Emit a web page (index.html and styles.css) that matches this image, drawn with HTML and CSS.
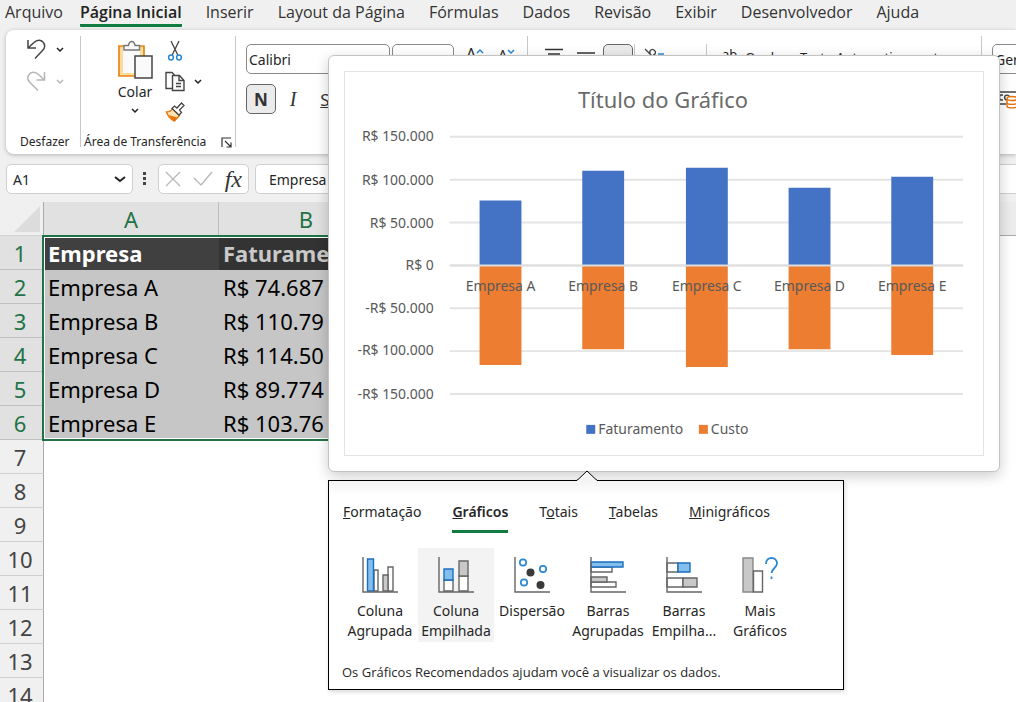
FILE: index.html
```html
<!DOCTYPE html>
<html lang="pt-BR">
<head>
<meta charset="utf-8">
<meta name="viewport" content="width=device-width, initial-scale=1">
<title>Planilha</title>
<link rel="stylesheet" href="styles.css">
</head>
<body>
<div class="app">
  <nav class="menu">
    <button class="menu-tab">Arquivo</button>
    <button class="menu-tab active">Página Inicial</button>
    <button class="menu-tab">Inserir</button>
    <button class="menu-tab">Layout da Página</button>
    <button class="menu-tab">Fórmulas</button>
    <button class="menu-tab">Dados</button>
    <button class="menu-tab">Revisão</button>
    <button class="menu-tab">Exibir</button>
    <button class="menu-tab">Desenvolvedor</button>
    <button class="menu-tab">Ajuda</button>
  </nav>

  <section class="ribbon">
    <div class="group undo-group">
      <div class="undo-row">
        <button class="icon-btn" aria-label="Desfazer"><svg width="22" height="24" viewBox="0 0 22 24" fill="none" stroke="#444" stroke-width="1.5"><path d="M2 2v8h8M2 10l6-5.500C11 1.500 15 1.500 17 4c2.300 2.700 2 6-.5 8.500L9 20.500"/></svg></button>
        <button class="icon-btn" aria-label="Opções de desfazer"><svg width="8" height="6" viewBox="0 0 8 6" fill="none" stroke="#222" stroke-width="1.500"><path d="m1 1 3 3 3-3"/></svg></button>
      </div>
      <div class="undo-row">
        <button class="icon-btn" aria-label="Refazer"><svg width="22" height="24" viewBox="0 0 22 24" fill="none" stroke="#b5b5b5" stroke-width="1.5"><path d="M18.500 2v8h-8M18.500 10 12.500 4.500C9.500 1.500 5.500 1.500 3.500 4c-2.300 2.700-2 6 .5 8.500l8 8"/></svg></button>
        <button class="icon-btn" aria-label="Opções de refazer"><svg width="8" height="6" viewBox="0 0 8 6" fill="none" stroke="#b5b5b5" stroke-width="1.500"><path d="m1 1 3 3 3-3"/></svg></button>
      </div>
      <div class="group-label">Desfazer</div>
    </div>

    <div class="group clip-group">
      <div class="clip-tools">
        <button class="paste-btn">
          <svg width="36" height="40" viewBox="0 0 36 40" fill="none"><path d="M2 6h25v30H2z" fill="#fbdd9b" stroke="#e8851a" stroke-width="1.700"/><path d="M6 9h17v24H6z" fill="#fafafa"/><path d="M7 10V5.500h4.500C12 2.500 13 1.500 14.700 1.500S17.500 2.500 18 5.500h4.500V10z" fill="#fafafa" stroke="#777" stroke-width="1.400"/><path d="M18 16h17v22H18z" fill="#fafafa" stroke="#444" stroke-width="1.500"/></svg>
          <span>Colar</span>
          <svg width="8" height="6" viewBox="0 0 8 6" fill="none" stroke="#222" stroke-width="1.500"><path d="m1 1 3 3 3-3"/></svg>
        </button>
        <div class="clip-side">
          <button class="icon-btn" aria-label="Recortar"><svg width="20" height="22" viewBox="0 0 20 22" fill="none"><path d="m6 1 6.800 14M14 1 7.200 15" stroke="#444" stroke-width="1.300"/><circle cx="6" cy="17.500" r="2.400" stroke="#2b88d0" stroke-width="1.500"/><circle cx="14" cy="17.500" r="2.400" stroke="#2b88d0" stroke-width="1.500"/></svg></button>
          <div class="copy-row">
            <button class="icon-btn" aria-label="Copiar"><svg width="20" height="22" viewBox="0 0 20 22" fill="none" stroke="#444" stroke-width="1.400"><path d="M7 17.500H1V1.500h6l2.500 2.500"/><path d="M7.500 4.500h7l4.500 5v10H7.500z" fill="#fafafa"/><path d="M14 4.500v5h5M11 12.500h5M11 15.500h5"/></svg></button>
            <button class="icon-btn" aria-label="Opções de copiar"><svg width="8" height="6" viewBox="0 0 8 6" fill="none" stroke="#222" stroke-width="1.500"><path d="m1 1 3 3 3-3"/></svg></button>
          </div>
          <button class="icon-btn" aria-label="Pincel de formatação"><svg width="20" height="20" viewBox="0 0 20 20" fill="none"><path d="M1.500 10C4 10 6 9 7.500 6.500l7 7L9.500 19C6 17.500 3 14.500 1.500 10z" fill="#fbe3b0" stroke="#e8710a" stroke-width="1.400"/><path d="m3.500 13 8.500 2.500-3 3.500z" fill="#e8710a"/><path d="m7 6.500 2.500-2.500 2.500 2 4.500-5 2.500 2.500-4.500 4.500 2 2.500-2.500 2.500z" fill="#fff" stroke="#444" stroke-width="1.300"/></svg></button>
        </div>
      </div>
      <div class="group-label">Área de Transferência
        <button class="icon-btn" aria-label="Abrir área de transferência"><svg width="11" height="11" viewBox="0 0 11 11" fill="none" stroke="#333" stroke-width="1.200"><path d="M1 10V1h9M4 4l6 6M10 5.500V10H5.500"/></svg></button>
      </div>
    </div>

    <div class="group font-group">
      <div class="tool-row">
        <input class="box font-name" aria-label="Fonte" value="Calibri">
        <input class="box font-size" aria-label="Tamanho da fonte" value="11">
        <button class="letter-btn" aria-label="Aumentar fonte">A<svg width="8" height="6" viewBox="0 0 8 6" fill="none" stroke="#2b88d0" stroke-width="1.500"><path d="m1 5 3-3 3 3"/></svg></button>
        <button class="letter-btn small" aria-label="Diminuir fonte">A<svg width="8" height="6" viewBox="0 0 8 6" fill="none" stroke="#2b88d0" stroke-width="1.500"><path d="m1 1 3 3 3-3"/></svg></button>
      </div>
      <div class="tool-row style-row">
        <button class="style-btn on"><b>N</b></button>
        <button class="style-btn"><i>I</i></button>
        <button class="style-btn"><u>S</u></button>
      </div>
    </div>

    <div class="group align-group">
      <div class="tool-row">
        <button class="align-btn" aria-label="Alinhar em cima"><svg width="20" height="20" viewBox="0 0 20 20" stroke="#333" stroke-width="1.500"><path d="M1 5.500h18M4 10h12"/></svg></button>
        <button class="align-btn" aria-label="Alinhar no meio"><svg width="20" height="20" viewBox="0 0 20 20" stroke="#333" stroke-width="1.500"><path d="M1 9h18M4 13h12"/></svg></button>
        <button class="align-btn on" aria-label="Alinhar embaixo"><svg width="20" height="20" viewBox="0 0 20 20" stroke="#333" stroke-width="1.500"><path d="M4 14h12M1 18h18"/></svg></button>
        <button class="align-btn turn" aria-label="Orientação"><svg width="20" height="20" viewBox="0 0 20 20" fill="none" stroke="#444" stroke-width="1.300"><path d="m1 5 7 7M7 11c-3-3 0-7 3-5s1 5-1 5"/><path d="M14 10h6" stroke="#2b88d0"/></svg></button>
        <button class="wrap-btn"><span>ab</span>Quebrar Texto Automaticamente</button>
      </div>
    </div>

    <div class="group number-group">
      <input class="box" aria-label="Formato de número" value="Geral">
      <button class="icon-btn" aria-label="Formato de contabilização"><svg width="30" height="20" viewBox="0 0 30 20" fill="none" stroke="#444" stroke-width="1.400"><path d="M0 2h24M0 14h14M11 5h-2c-2 0-2 5 0 5h2"/><circle cx="15" cy="7.500" r="2.400"/><path d="M15 9v7c0 2.500 10 2.500 10 0V9" fill="#fff" stroke="#e8710a"/><ellipse cx="20" cy="8.500" rx="5" ry="2" fill="#fff" stroke="#e8710a"/><path d="M15 12.500c0 2.500 10 2.500 10 0" stroke="#e8710a"/></svg></button>
    </div>
  </section>

  <section class="formula-bar">
    <button class="name-box" aria-label="Caixa de nome">A1<svg width="12" height="8" viewBox="0 0 12 8" fill="none" stroke="#222" stroke-width="2"><path d="m1 2 5 4 5-4"/></svg></button>
    <svg class="dots" width="4" height="14" viewBox="0 0 4 14" fill="#444"><path d="M0 0h3v3H0zM0 5h3v3H0zM0 10h3v3H0z"/></svg>
    <div class="fx-box">
      <button class="icon-btn" aria-label="Cancelar"><svg width="16" height="16" viewBox="0 0 16 16" fill="none" stroke="#b8b8b8" stroke-width="1.300"><path d="m1 1 14 14M15 1 1 15"/></svg></button>
      <button class="icon-btn" aria-label="Inserir"><svg width="20" height="16" viewBox="0 0 20 16" fill="none" stroke="#b8b8b8" stroke-width="1.400"><path d="m1 7 7 7L19 1"/></svg></button>
      <button class="fx">fx</button>
    </div>
    <input class="formula" aria-label="Barra de fórmulas" value="Empresa">
  </section>

  <section class="sheet">
    <table class="grid">
      <colgroup><col class="c-head"><col class="c-data"><col class="c-data"><col class="c-data"><col></colgroup>
      <thead><tr><th class="corner"><svg width="26" height="26" viewBox="0 0 26 26"><path d="M26 0v26H0z" fill="#dcdcdc"/></svg></th><th>A</th><th>B</th><th></th><th class="rest"></th></tr></thead>
      <tbody>
        <tr class="sel title"><th>1</th><td>Empresa</td><td>Faturamento</td><td></td><td></td></tr>
        <tr class="sel"><th>2</th><td>Empresa A</td><td>R$ 74.687</td><td></td><td></td></tr>
        <tr class="sel"><th>3</th><td>Empresa B</td><td>R$ 110.79</td><td></td><td></td></tr>
        <tr class="sel"><th>4</th><td>Empresa C</td><td>R$ 114.50</td><td></td><td></td></tr>
        <tr class="sel"><th>5</th><td>Empresa D</td><td>R$ 89.774</td><td></td><td></td></tr>
        <tr class="sel"><th>6</th><td>Empresa E</td><td>R$ 103.76</td><td></td><td></td></tr>
        <tr><th>7</th><td></td><td></td><td></td><td></td></tr>
        <tr><th>8</th><td></td><td></td><td></td><td></td></tr>
        <tr><th>9</th><td></td><td></td><td></td><td></td></tr>
        <tr><th>10</th><td></td><td></td><td></td><td></td></tr>
        <tr><th>11</th><td></td><td></td><td></td><td></td></tr>
        <tr><th>12</th><td></td><td></td><td></td><td></td></tr>
        <tr><th>13</th><td></td><td></td><td></td><td></td></tr>
        <tr><th>14</th><td></td><td></td><td></td><td></td></tr>
      </tbody>
    </table>
    <div class="selection"></div>
  </section>

  <aside class="preview">
    <svg class="chart" viewBox="0 0 640 384" role="img" aria-label="Título do Gráfico">
      <text class="chart-title" x="319" y="36">Título do Gráfico</text>
      <path class="gridlines" d="M105 65h515M105 108h515M105 151h515M105 194h515M105 237h515M105 280h515M105 323h515"/>
      <g class="axis">
        <text x="89" y="69">R$ 150.000</text><text x="89" y="113">R$ 100.000</text><text x="89" y="156">R$ 50.000</text><text x="89" y="199">R$ 0</text><text x="89" y="242">-R$ 50.000</text><text x="89" y="284">-R$ 100.000</text><text x="89" y="328">-R$ 150.000</text>
      </g>
      <g fill="#4472c4"><path d="M135 129h42v65h-42zM238 99h42v95h-42zM342 96h42v98h-42zM445 116h42v78h-42zM548 105h42v89h-42z"/></g>
      <g fill="#ed7d31"><path d="M135 194h42v100h-42zM238 194h42v84h-42zM342 194h42v102h-42zM445 194h42v84h-42zM548 194h42v90h-42z"/></g>
      <path d="M105 194h515" stroke="#dedede" stroke-width="2"/>
      <g class="cats">
        <text x="156" y="220">Empresa A</text><text x="259" y="220">Empresa B</text><text x="363" y="220">Empresa C</text><text x="466" y="220">Empresa D</text><text x="569" y="220">Empresa E</text>
      </g>
      <path d="M242 354h9v9h-9z" fill="#4472c4"/><text class="legend" x="254" y="363">Faturamento</text>
      <path d="M355 354h9v9h-9z" fill="#ed7d31"/><text class="legend" x="367" y="363">Custo</text>
    </svg>
  </aside>

  <aside class="quick">
    <svg class="pointer" width="20" height="11" viewBox="0 0 20 11"><path d="M0 11v-1L10 1l10 9v1z" fill="#f4f4f4"/><path d="m0 10 1-.5L10 1l9 8.500 1 .5" fill="none" stroke="#000"/></svg>
    <div class="quick-tabs">
      <button><u>F</u>ormatação</button>
      <button class="active"><u>G</u>ráficos</button>
      <button>T<u>o</u>tais</button>
      <button><u>T</u>abelas</button>
      <button><u>M</u>inigráficos</button>
    </div>
    <div class="quick-items">
      <button><svg width="36" height="36" viewBox="0 0 36 36" fill="#fff" stroke="#666" stroke-width="1.400"><path d="M12 13h4v21h-4zM26 10h5v24h-5z"/><path d="M21 18h5v16h-5z" fill="#c8c8c8"/><path d="M5.500 2h6v32h-6z" fill="#83beec" stroke="#1a6fc0"/><path d="M1 0v35h35" fill="none"/></svg>Coluna<br>Agrupada</button>
      <button class="active"><svg width="36" height="36" viewBox="0 0 36 36" fill="#fff" stroke="#666" stroke-width="1.400"><path d="M6 23h9v11H6zM21 19h9v15h-9z"/><path d="M21 4h9v15h-9z" fill="#c8c8c8"/><path d="M6 12h9v11H6z" fill="#83beec" stroke="#1a6fc0"/><path d="M1 0v35h35" fill="none"/></svg>Coluna<br>Empilhada</button>
      <button><svg width="36" height="36" viewBox="0 0 36 36" fill="#fff" stroke="#666" stroke-width="1.400"><path d="M1 0v35h35" fill="none"/><g stroke="#2b88d0" stroke-width="1.700"><circle cx="9" cy="5.500" r="3.200"/><circle cx="29" cy="12" r="3.200"/><circle cx="10" cy="25.500" r="3.200"/></g><g fill="#3b3a39" stroke="none"><circle cx="16.500" cy="15.500" r="4"/><circle cx="26.500" cy="28" r="4"/></g></svg>Dispersão</button>
      <button><svg width="36" height="36" viewBox="0 0 36 36" fill="#fff" stroke="#666" stroke-width="1.400"><path d="M1 10h21v5H1zM1 25h25v5H1z"/><path d="M1 20h16v5H1z" fill="#c8c8c8"/><path d="M1 5h32v5H1z" fill="#83beec" stroke="#1a6fc0"/><path d="M1 0v35h35" fill="none"/></svg>Barras<br>Agrupadas</button>
      <button><svg width="36" height="36" viewBox="0 0 36 36" fill="#fff" stroke="#666" stroke-width="1.400"><path d="M1 6h11v9H1zM1 21h16v9H1z"/><path d="M17 21h14v9H17z" fill="#c8c8c8"/><path d="M12 6h12v9H12z" fill="#83beec" stroke="#1a6fc0"/><path d="M1 0v35h35" fill="none"/></svg>Barras<br>Empilha...</button>
      <button><svg width="36" height="36" viewBox="0 0 36 36" fill="#fff" stroke="#666" stroke-width="1.400"><path d="M1 1h10v34H1z" fill="#c8c8c8" stroke="#888"/><path d="M11.500 14h9v21h-9z"/><path d="M24 7c0-4 2.500-6 5.500-6S35 3 35 6.500c0 4-5.500 5.500-5.500 9.500M29.500 19.500v2.500" fill="none" stroke="#2b88d0" stroke-width="1.800"/></svg>Mais<br>Gráficos</button>
    </div>
    <p>Os Gráficos Recomendados ajudam você a visualizar os dados.</p>
  </aside>
</div>
</body>
</html>
```

FILE: styles.css
```css
* { box-sizing: border-box; }
body {
  margin: 0;
  font-family: "Noto Sans", "Open Sans", sans-serif;
  font-size: 13px;
  color: #262626;
}
button, input { font: inherit; color: inherit; }
button { background: none; border: 0; padding: 0; }
svg { display: block; flex: none; }
.app {
  position: relative;
  display: flex;
  flex-direction: column;
  height: 100vh;
  overflow: hidden;
  background: #f0f0f0;
}

.menu {
  display: flex;
  flex: none;
  gap: 24px;
  height: 30px;
  padding: 0 5px 3px;
  font-family: "Open Sans", sans-serif;
  font-size: 16px;
  line-height: 22px;
  white-space: nowrap;
}
.menu-tab { color: #333; padding-bottom: 4px; }
.menu-tab:first-child { margin-right: -7px; }
.menu-tab.active { padding-bottom: 1px; font-weight: 600; color: #222; border-bottom: 3px solid #107c41; border-radius: 1px; }

.ribbon {
  display: flex;
  flex: none;
  height: 124px;
  margin-left: 6px;
  background: #fff;
  border-radius: 8px 0 0 8px;
  box-shadow: 0 1px 4px rgba(0, 0, 0, .25);
  overflow: hidden;
}
.group { position: relative; flex: none; padding-top: 6px; }
.group::after {
  content: "";
  position: absolute;
  right: 0;
  top: 6px;
  bottom: 7px;
  width: 1px;
  background: #c8c8c8;
}
.group-label {
  display: flex;
  align-items: center;
  justify-content: space-between;
  margin-top: auto;
  padding-bottom: 3px;
  font-size: 12px;
  line-height: 18px;
  white-space: nowrap;
}
.undo-group, .clip-group { display: flex; flex-direction: column; }
.undo-group { width: 75px; padding: 4px 0 0 14px; }
.undo-row { display: flex; align-items: center; gap: 8px; height: 32px; padding-left: 6px; }
.clip-group { width: 155px; padding-left: 3px; }
.clip-group .group-label { padding-right: 4px; }
.clip-tools { display: flex; gap: 12px; padding: 4px 0 0 33px; }
.paste-btn { display: flex; flex-direction: column; align-items: center; width: 36px; font-size: 14px; line-height: 20px; }
.paste-btn span { margin: 2px 0 6px; }
.clip-side { display: flex; flex-direction: column; gap: 9px; }
.clip-side > .icon-btn { width: 20px; }
.copy-row { display: flex; align-items: center; gap: 9px; }
.tool-row { display: flex; align-items: flex-start; height: 30px; white-space: nowrap; }
.box {
  height: 30px;
  border: 1px solid #8a8a8a;
  border-radius: 5px;
  background: #fff;
  padding: 0 2px;
  font-size: 14px;
  min-width: 0;
}
.font-group { width: 292px; padding: 14px 0 0 10px; }
.font-name { width: 144px; margin-right: 2px; }
.font-size { width: 62px; padding-left: 6px; margin-right: 12px; }
.letter-btn { display: flex; align-items: flex-start; font-size: 16px; line-height: 20px; }
.letter-btn svg { margin-top: 4px; }
.letter-btn.small { padding-top: 1px; margin-left: 14px; font-size: 14px; }
.style-row { gap: 2px; margin-top: 10px; }
.style-btn { width: 30px; height: 30px; border-radius: 5px; font-size: 17px; color: #333; }
.style-btn i { font-family: "Liberation Serif", serif; font-size: 20px; }
.style-btn.on { border: 1px solid #666; background: #ebebeb; }
.align-group { width: 454px; padding: 14px 0 0 10px; }
.align-btn { display: flex; justify-content: center; width: 32px; height: 30px; border-radius: 5px; }
.align-btn.on { width: 30px; margin-left: 1px; border: 1px solid #666; background: #ebebeb; }
.align-btn.turn { width: 73px; justify-content: flex-start; padding-left: 9px; margin-left: 1px; border-left: 1px solid #c8c8c8; border-right: 1px solid #c8c8c8; border-radius: 0; }
.wrap-btn { display: flex; gap: 8px; padding: 4px 0 0 15px; line-height: 18px; }
.wrap-btn span { margin-top: -3px; }
.number-group { flex: 1; padding: 14px 0 0 10px; }
.number-group .box { width: 160px; margin-bottom: 16px; }

.formula-bar { display: flex; flex: none; align-items: center; gap: 6px; padding: 10px 0 8px 6px; font-size: 14px; }
.name-box, .fx-box, .formula { height: 30px; background: #fff; border: 1px solid #cfcfcf; border-radius: 5px; }
.name-box { display: flex; align-items: center; justify-content: space-between; width: 127px; padding: 0 6px; }
.dots { margin: 0 5px 0 4px; }
.fx-box { display: flex; align-items: center; justify-content: space-between; width: 91px; padding: 0 6px; }
.fx { font: italic 24px/26px "Liberation Serif", serif; color: #333; }
.formula { flex: 1; min-width: 0; padding: 0 13px; border-right: 0; border-radius: 5px 0 0 5px; }

.sheet { position: relative; flex: 1; min-height: 0; overflow: hidden; background: #fff; }
.grid { width: 100%; table-layout: fixed; border-collapse: separate; border-spacing: 0; font-size: 22px; color: #000; }
.c-head { width: 44px; }
.c-data { width: 175px; }
.grid th, .grid td { height: 34px; padding: 0; line-height: 32px; white-space: nowrap; overflow: hidden; }
.grid th { font-weight: 400; }
.grid thead th { background: #e1e1e1; color: #217346; border-right: 1px solid #bdbdbd; border-bottom: 1px solid #ababab; }
.grid thead .rest { background: #ececec; border-right: 0; }
.grid thead .corner { background: #f0f0f0; border-right-color: #ababab; border-bottom-color: #d4d4d4; }
.corner svg { margin: 0 0 0 14px; }
.grid tbody th { background: #f0f0f0; color: #444; border-right: 1px solid #ababab; border-bottom: 1px solid #d0d0d0; padding-right: 3px; }
.grid .sel th { background: #e1e1e1; color: #217346; border-bottom-color: #c0c0c0; }
.grid td { padding-left: 4px; }
.sel td { background: #c6c6c6; }
.title td { background: #333; color: #c9c9c9; font-weight: 700; }
.title td:nth-child(2) { background: #404040; color: #fff; }
.sel td:last-child { background: #fff; }
.selection { position: absolute; left: 42px; top: 33px; width: 527px; height: 206px; border: 2px solid #217346; box-shadow: inset 0 0 0 1px #fff; }

.preview {
  position: absolute;
  left: 328px;
  top: 55px;
  width: 672px;
  padding: 15px;
  background: #fff;
  border: 1px solid #c3c3c3;
  border-radius: 6px;
  box-shadow: 0 4px 14px rgba(0, 0, 0, .2);
}
.chart { width: 100%; border: 1px solid #e4e4e4; font-size: 14px; fill: #595959; }
.chart-title { font-size: 22px; text-anchor: middle; fill: #6b6b6b; }
.gridlines { stroke: #e4e4e4; stroke-width: 2; }
.axis { text-anchor: end; }
.cats { text-anchor: middle; }

.quick {
  position: absolute;
  left: 328px;
  top: 480px;
  width: 516px;
  height: 210px;
  padding: 19px 13px 0;
  background: linear-gradient(#f4f4f4, #fff 14px);
  border: 1px solid #000;
  box-shadow: 1px 2px 4px rgba(0, 0, 0, .15);
}
.pointer { position: absolute; left: 248px; top: -11px; }
.quick-tabs { display: flex; gap: 31px; font-size: 14px; line-height: 22px; padding-left: 1px; }
.quick-tabs button { height: 33px; padding-bottom: 9px; }
.quick-tabs .active { padding-bottom: 6px; font-weight: 600; border-bottom: 3px solid #107c41; }
.quick-items { display: flex; margin-top: 15px; font-size: 14px; line-height: 20px; }
.quick-items button { display: flex; flex-direction: column; align-items: center; width: 76px; height: 94px; padding-top: 9px; text-align: center; white-space: nowrap; }
.quick-items svg { margin-bottom: 8px; }
.quick-items .active { background: #f3f3f3; }
.quick p { margin: 21px 0 0; font-family: "Open Sans", sans-serif; font-size: 13px; line-height: 18px; white-space: nowrap; }
```
